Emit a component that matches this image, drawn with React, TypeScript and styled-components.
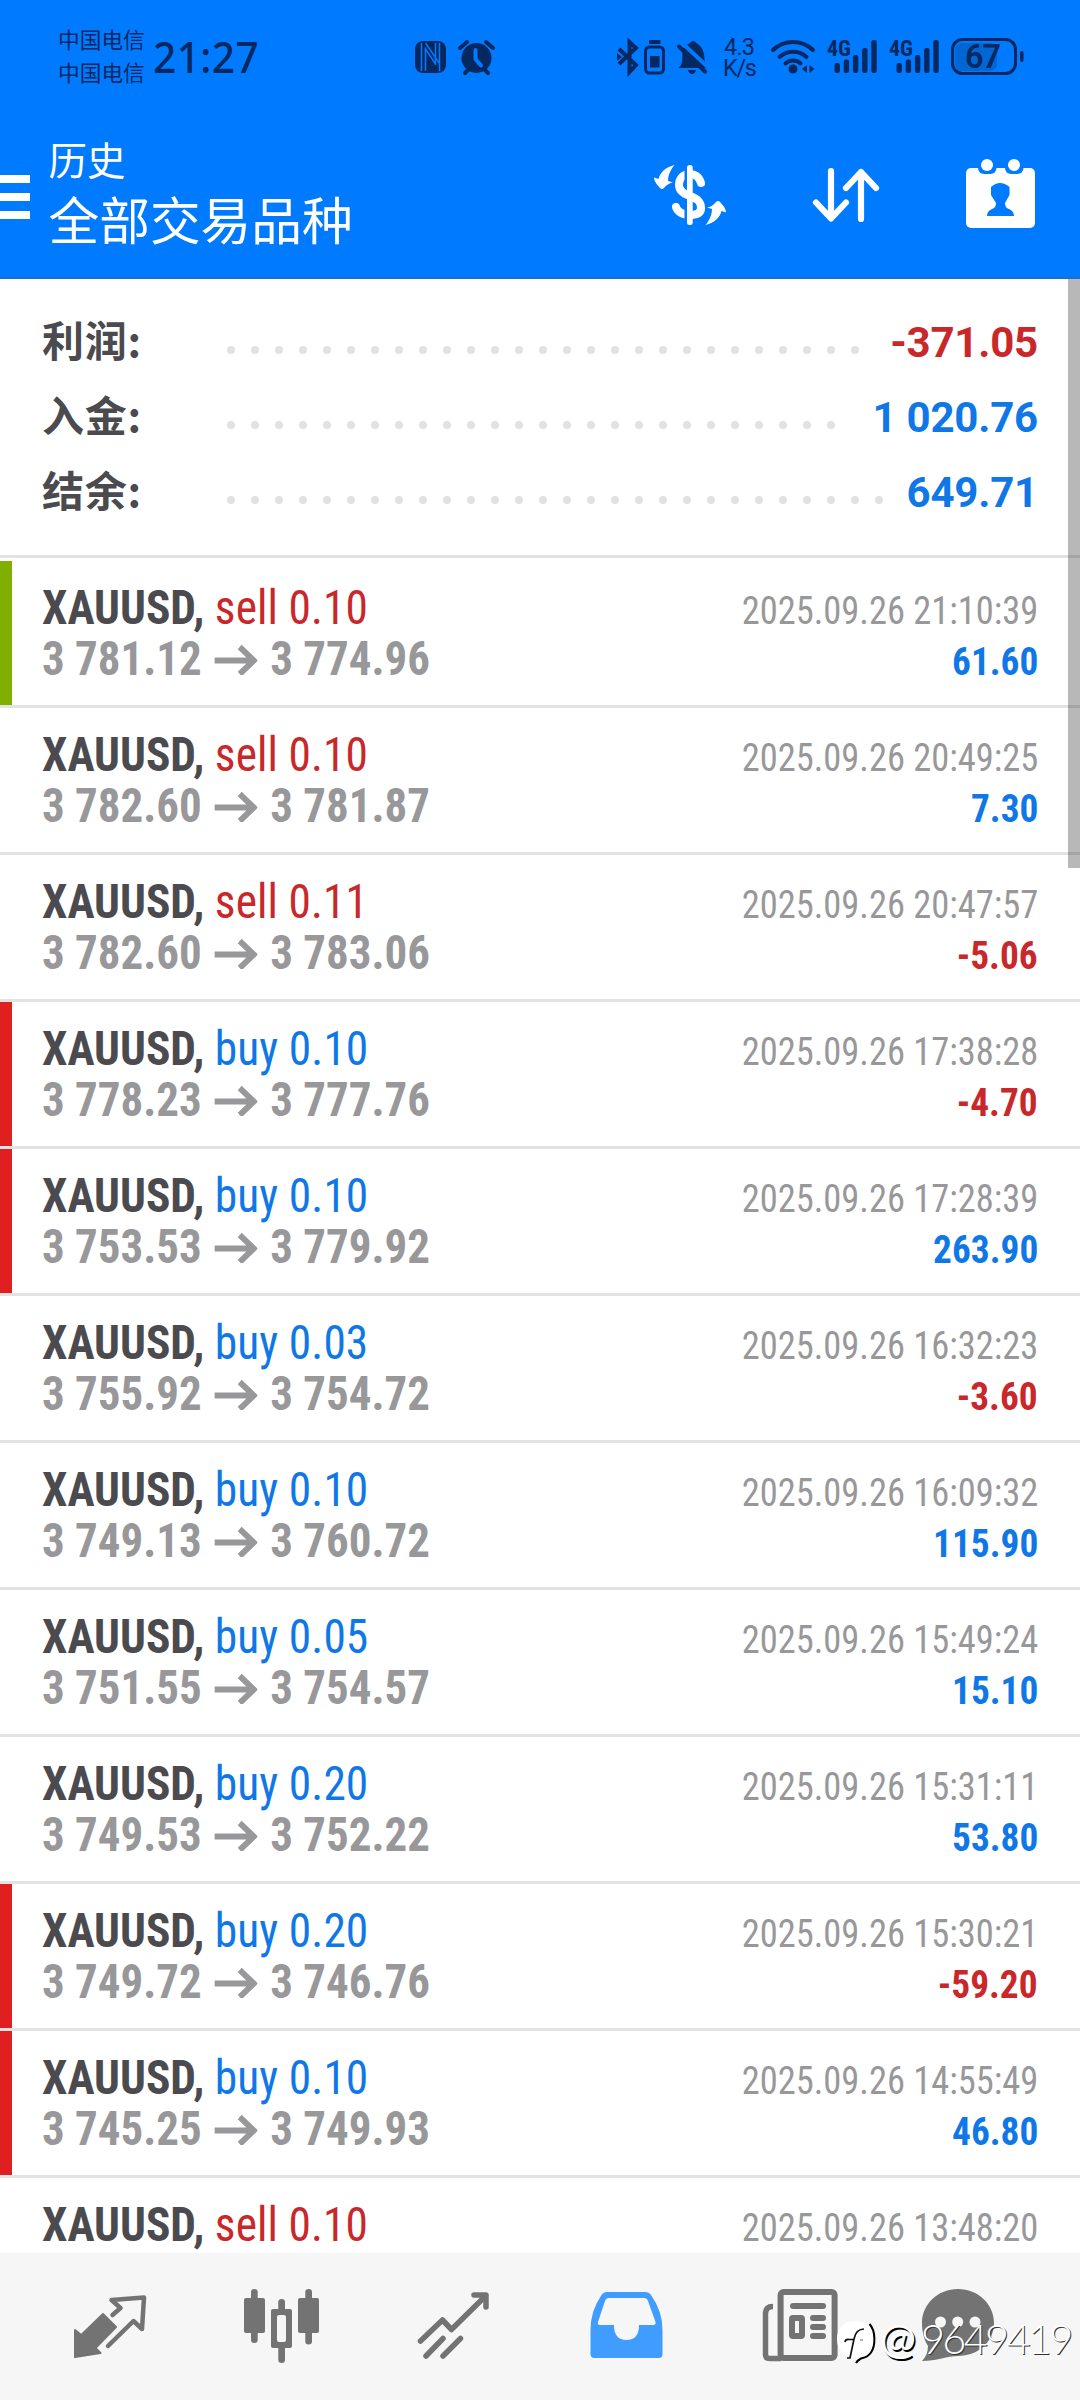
import React from "react";
import styled, { createGlobalStyle } from "styled-components";

const cond = `"Roboto Condensed", Roboto, "Liberation Sans Narrow", sans-serif`;
const cjk = `Roboto, "Noto Sans CJK SC", sans-serif`;
const ink = "#04285f";
const red = "#c9282b";
const blue = "#0f78e6";
const gray = "#98989b";

const Global = createGlobalStyle`
  *{box-sizing:border-box}
  body{margin:0;background:#fff;}
`;

const Screen = styled.div`
  width: 1080px;
  height: 2400px;
  display: flex;
  flex-direction: column;
  position: relative;
  overflow: hidden;
  background: #fff;
  font-family: ${cjk};
`;

const TopArea = styled.header`
  height: 279px;
  flex: none;
  background: #007aff;
  border-bottom: 2px solid #1a6fd0;
`;

const StatusBar = styled.div`
  height: 112px;
  padding: 0 56px 0 58px;
  display: flex;
  align-items: center;
  justify-content: space-between;
  color: ${ink};
`;

const StatusLeft = styled.div`
  display: flex;
  align-items: center;
  gap: 8px;
  white-space: nowrap;
`;

const Carriers = styled.div`
  font: 400 21.7px/33px "Noto Sans CJK SC", sans-serif;
  padding-bottom: 3px;
`;

const Clock = styled.div`
  font: 500 44px/50px "Noto Sans", sans-serif;
  letter-spacing: 0.4px;
  transform: scaleX(0.925);
  transform-origin: left;
`;

const AppBar = styled.div`
  height: 165px;
  display: flex;
  align-items: flex-start;
`;

const MenuButton = styled.div`
  width: 30px;
  margin-top: 63px;
  display: flex;
  flex-direction: column;
  gap: 10px;
`;
const MenuLine = styled.i`
  height: 8px;
  background: #fff;
`;

const Titles = styled.div`
  padding: 18px 0 0 18.5px;
  color: #fff;
  font-family: "Noto Sans CJK SC", sans-serif;
  flex: 1;
`;
const Small = styled.div`
  font-size: 38.5px;
  line-height: 56px;
`;
const Big = styled.div`
  font-size: 50.7px;
  line-height: 64px;
`;

const ActionsWrap = styled.div`
  height: 100px;
  width: 430px;
  margin-top: 33px;
`;

const Summary = styled.section`
  height: 279px;
  flex: none;
  padding: 26px 42px 0;
  border-bottom: 3px solid #e3e3e3;
`;
const SummaryRow = styled.div`
  height: 75px;
  display: flex;
  align-items: center;
`;
const SummaryLabel = styled.div`
  width: 176.5px;
  padding-bottom: 7px;
  font: 700 42px/68px "Noto Sans CJK SC", sans-serif;
  letter-spacing: 0.8px;
  color: #4a4a4f;
`;
const Leader = styled.div`
  flex: 1;
  height: 24px;
  margin: 15px 10px 0 0;
  display: flex;
  flex-wrap: wrap;
  overflow: hidden;
`;
const Dot = styled.i`
  width: 8px;
  height: 8px;
  margin: 8px;
  border-radius: 50%;
  background: #e2e2e2;
`;
const SummaryValue = styled.div<{ $neg?: boolean }>`
  font: 700 42px/75px Roboto, sans-serif;
  letter-spacing: -0.2px;
  color: ${(p) => (p.$neg ? red : blue)};
  white-space: pre;
`;

const Deals = styled.main`
  flex: 1;
  min-height: 0;
  overflow: hidden;
  padding-top: 3px;
`;
const Deal = styled.article<{ $bar?: string }>`
  height: 147px;
  padding: 21px 42px 0 42px;
  border-bottom: 3px solid #e3e3e3;
  display: flex;
  justify-content: space-between;
  position: relative;
  &::before {
    content: "";
    position: absolute;
    inset: 0 auto 0 0;
    width: 12px;
    background: ${(p) => p.$bar ?? "transparent"};
  }
`;
const Col = styled.div<{ $right?: boolean }>`
  display: flex;
  flex-direction: column;
  align-items: ${(p) => (p.$right ? "flex-end" : "flex-start")};
  font-family: ${cond};
  white-space: pre;
`;
const Line = styled.div<{ $squeeze: number }>`
  line-height: 51px;
  height: 51px;
  transform: scaleX(${(p) => p.$squeeze});
`;
const Title = styled(Line)`
  font-size: 48px;
  font-weight: 700;
  color: #4a4a4f;
  transform-origin: left;
`;
const Side = styled.span<{ $sell: boolean }>`
  font-weight: 400;
  letter-spacing: 0.1px;
  color: ${(p) => (p.$sell ? red : blue)};
`;
const Prices = styled(Line)`
  font-size: 48px;
  font-weight: 700;
  color: ${gray};
  display: flex;
  align-items: center;
  gap: 13.5px;
  transform-origin: left;
`;
const When = styled(Line)`
  font-size: 39.5px;
  padding-top: 3px;
  color: ${gray};
  transform-origin: right;
`;
const Profit = styled(Line)<{ $neg: boolean }>`
  font-size: 39.5px;
  padding-top: 3px;
  font-weight: 700;
  color: ${(p) => (p.$neg ? red : blue)};
  transform-origin: right;
`;

const ScrollThumb = styled.div`
  position: absolute;
  right: 0;
  top: 279px;
  width: 12px;
  height: 589px;
  background: rgba(0, 0, 0, 0.28);
`;

const TabBar = styled.nav`
  height: 147px;
  flex: none;
  background: #f6f6f6;
  display: flex;
`;

const Watermark = styled.div`
  position: absolute;
  left: 836px;
  top: 2309px;
  display: flex;
  align-items: center;
  color: #fff;
  font: 300 41.5px/58px Lato, sans-serif;
  text-shadow: 1px 1px 0 #333;
`;
const At = styled.span`
  margin-left: 4px;
  width: 41px;
  font: 400 43px/58px Lato, sans-serif;
  text-shadow: 1.5px 1.5px 0 #000;
`;
const Digits = styled.span`
  letter-spacing: -2.7px;
`;

const rows: [string, string, string, string, string, string, string?][] = [
  ["sell", "0.10", "3 781.12", "3 774.96", "21:10:39", "61.60", "#7fb000"],
  ["sell", "0.10", "3 782.60", "3 781.87", "20:49:25", "7.30"],
  ["sell", "0.11", "3 782.60", "3 783.06", "20:47:57", "-5.06"],
  ["buy", "0.10", "3 778.23", "3 777.76", "17:38:28", "-4.70", "#e02020"],
  ["buy", "0.10", "3 753.53", "3 779.92", "17:28:39", "263.90", "#e02020"],
  ["buy", "0.03", "3 755.92", "3 754.72", "16:32:23", "-3.60"],
  ["buy", "0.10", "3 749.13", "3 760.72", "16:09:32", "115.90"],
  ["buy", "0.05", "3 751.55", "3 754.57", "15:49:24", "15.10"],
  ["buy", "0.20", "3 749.53", "3 752.22", "15:31:11", "53.80"],
  ["buy", "0.20", "3 749.72", "3 746.76", "15:30:21", "-59.20", "#e02020"],
  ["buy", "0.10", "3 745.25", "3 749.93", "14:55:49", "46.80", "#e02020"],
  ["sell", "0.10", "", "", "13:48:20", ""],
];

const NetText = `"Roboto Condensed", Roboto, sans-serif`;

function Signal({ x }: { x: number }) {
  return (
    <g transform={`translate(${x} 0)`} fill={ink}>
      <text x="0" y="56" fontSize="22" fontWeight="700" fontFamily={NetText} textLength="24" lengthAdjust="spacingAndGlyphs">4G</text>
      {[63, 59.5, 55, 48, 40].map((t, i) => (
        <rect key={i} x={7.5 + i * 9.2} y={t} width="5.4" height={73 - t} rx="2.2" />
      ))}
    </g>
  );
}

const StatusIcons = () => (
  <svg width="612" height="60" viewBox="412 26 612 60" fill={ink}>
    <rect x="415" y="41" width="31" height="32" rx="8" />
    <path d="M421.500 43v28M425.500 71V49L435.500 64M435.500 43v22M425.500 43L439.500 63.500V71M439.500 43v20" stroke="#007aff" strokeWidth="1.500" fill="none" />
    <circle cx="476.500" cy="58" r="15" />
    <path d="M460 48l7-6M493 48l-7-6M465 73l4-4M488 73l-4-4" stroke={ink} strokeWidth="4" strokeLinecap="round" />
    <path d="M475.500 50v9l5.500 6.500" stroke="#007aff" strokeWidth="4" fill="none" strokeLinecap="round" />
    <path d="M619 49l17 16-6.500 7V42l6.500 6-17 16" stroke={ink} strokeWidth="4" fill="none" />
    <path d="M617 53l5 4-5 4z" />
    <rect x="645.500" y="47" width="18" height="26" rx="4" fill="none" stroke={ink} strokeWidth="3" />
    <rect x="649" y="40" width="11.500" height="4" rx="1" />
    <rect x="650" y="56" width="9.500" height="11.500" />
    <path d="M678.500 68c5-4 3.500-10 4-16 1-5 4-7 7.500-9 3-3 5-2 6 0 9 4 8 14 9 19l2 6z" />
    <path d="M688 70h8q-1 4-4 4t-4-4z" />
    <path d="M680 41l31 29" stroke="#007aff" strokeWidth="4" />
    <path d="M679 46.500l26 25" stroke={ink} strokeWidth="4" strokeLinecap="round" />
    <text x="724" y="55" fontSize="23.500" fontFamily="Roboto, sans-serif" textLength="31">4.3</text>
    <text x="723" y="76" fontSize="23.500" fontFamily="Roboto, sans-serif" textLength="34">K/s</text>
    <g stroke={ink} strokeWidth="4" strokeLinecap="round" fill="none">
      <path d="M773 50a29 29 0 0 1 40 0M779.500 57a20 20 0 0 1 27 0M785.500 63.500a11 11 0 0 1 15 0" />
    </g>
    <circle cx="793" cy="69" r="4.500" />
    <path d="M807 65v8l-5-4zM809.500 65v8l5-4z" />
    <Signal x={827} />
    <Signal x={889} />
    <rect x="955" y="43" width="42" height="28" rx="7" fill="#0066d4" />
    <rect x="952.500" y="39.500" width="63" height="34" rx="10" fill="none" stroke={ink} strokeWidth="3" />
    <rect x="1020" y="51" width="3.500" height="11" rx="1.700" />
    <text x="965" y="68" fontSize="32.500" fontWeight="600" fontFamily="Roboto, sans-serif" textLength="36">67</text>
  </svg>
);

const HeaderIcons = () => (
  <svg width="430" height="100" viewBox="650 145 430 100" fill="#fff">
    <path d="M701 183C699 176 694 174 690 174C682 174 679 180 679 185C679 191 684 194 690 196C698 199 701 202 701 208C701 213 697 215 690 215C682 215 677 211 676 207" fill="none" stroke="#fff" strokeWidth="8" strokeLinecap="round" />
    <path d="M684.500 165h2.500v20h-2.500zM684.500 204h2.500v20h-2.500z" fill="#007aff" />
    <rect x="687" y="165" width="5.700" height="60" rx="2.500" />
    <path id="swap" d="M674.600 165C665 167 660 173 658.500 179L654 177.500Q654 182 660 188Q662 190 664 188Q668 183 673 182.500L668 181C668 175 671 169 674.600 165Z" />
    <use href="#swap" transform="rotate(180 690 195)" />
    <g fill="none" stroke="#fff" strokeWidth="6.200" strokeLinecap="round" strokeLinejoin="round">
      <path d="M831 171v47M816 202.500l15 16 15-16M861 219v-47M846 188l15-16 15 16" />
    </g>
    <rect x="966" y="168" width="69" height="60" rx="5" />
    <rect x="978" y="160" width="18.500" height="14" rx="6" fill="#007aff" />
    <rect x="1005" y="160" width="18.500" height="14" rx="6" fill="#007aff" />
    <circle cx="987" cy="165" r="6" />
    <circle cx="1014" cy="165" r="6" />
    <path d="M991 187Q1000 179 1009.500 187V195L1005 203Q1005 208 1009 209Q1014 211 1014 216H987Q987 211 992 209Q996 208 996 203L991 195Z" fill="#007aff" />
  </svg>
);

const G = "#737373";
const TabIcons = () => (
  <svg width="1080" height="147" viewBox="0 2253 1080 147" fill={G}>
    <path d="M75 2330l6.300 5 21.700-21 13 13-20.500 21 5 5-25.500 4z" stroke={G} strokeWidth="2" strokeLinejoin="round" />
    <path d="M112.500 2315l8-7-9-8 32.500-2.500-2 31.500-8.500-8-25.500 25" fill="none" stroke={G} strokeWidth="4.500" strokeLinejoin="round" strokeLinecap="round" />
    <rect x="244" y="2298" width="21" height="35" rx="2" /><rect x="251" y="2289" width="6.700" height="54" rx="3.300" />
    <rect x="298" y="2298" width="21" height="35" rx="2" /><rect x="305.300" y="2289" width="6.700" height="55.500" rx="3.300" />
    <rect x="278.300" y="2299" width="6.700" height="64" rx="3.300" /><rect x="271" y="2309" width="21" height="39" rx="2" />
    <rect x="277" y="2315" width="9" height="27" rx="2" fill="#f6f6f6" />
    <path d="M420.500 2341l22-21 9 9.500 34.500-34M474 2295h12v12M426 2356l17-17.500M443 2356l17.500-17.500" fill="none" stroke={G} strokeWidth="5.500" strokeLinecap="round" strokeLinejoin="round" />
    <path d="M607 2292h38q4 0 6 3 11.500 16 11.500 35v24q0 4-4 4h-64q-4 0-4-4v-24q0-19 11-35 2-3 5.500-3z" fill="#419cff" />
    <path d="M609 2298h35q3 0 4 3l7.500 21q.5 3-2 3H639q0 15-12.500 15T614 2325h-14q-3 0-2-3l7-21q1-3 4-3z" fill="#f6f6f6" />
    <rect x="780.600" y="2292" width="54" height="66" rx="3" fill="none" stroke={G} strokeWidth="6" />
    <path d="M773 2306.500q-7.500 0-7.500 7v41q0 4 4 4h12" fill="none" stroke={G} strokeWidth="5.500" />
    <rect x="790" y="2303" width="36" height="6" rx="3" />
    <rect x="792" y="2318" width="10" height="18" rx="1" fill="none" stroke={G} strokeWidth="6" />
    <path d="M813 2318h10M813 2327h10M813 2336h10" stroke={G} strokeWidth="6" strokeLinecap="round" />
    <path d="M958 2289c20 0 36 15 36 34s-16 33-36 33c-10 0-22 5-36 5 4-4 6-9 6-15-4-6-6-14-6-23 0-19 16-34 36-34z" />
    <circle cx="940.500" cy="2322" r="5.500" fill="#f6f6f6" /><circle cx="957.700" cy="2322" r="5.500" fill="#f6f6f6" /><circle cx="975" cy="2322" r="5.500" fill="#f6f6f6" />
  </svg>
);

const Arrow = () => (
  <svg width="46" height="32" viewBox="0 0 46 32" fill="none" stroke={gray} strokeWidth="6.2">
    <path d="M0 17.500h42M27 4l15 13.500-15 13.500" />
  </svg>
);

export default function App() {
  return (
    <Screen>
      <Global />
      <TopArea>
        <StatusBar>
          <StatusLeft>
            <Carriers><div>中国电信</div><div>中国电信</div></Carriers>
            <Clock>21:27</Clock>
          </StatusLeft>
          <StatusIcons />
        </StatusBar>
        <AppBar>
          <MenuButton><MenuLine /><MenuLine /><MenuLine /></MenuButton>
          <Titles><Small>历史</Small><Big>全部交易品种</Big></Titles>
          <ActionsWrap><HeaderIcons /></ActionsWrap>
        </AppBar>
      </TopArea>
      <Summary>
        {[["利润:", "-371.05"], ["入金:", "1 020.76"], ["结余:", "649.71"]].map(([l, v]) => (
          <SummaryRow key={l}>
            <SummaryLabel>{l}</SummaryLabel>
            <Leader>{Array.from({ length: 34 }, (_, i) => <Dot key={i} />)}</Leader>
            <SummaryValue $neg={v[0] === "-"}>{v}</SummaryValue>
          </SummaryRow>
        ))}
      </Summary>
      <Deals>
        {rows.map(([side, lot, from, to, time, profit, bar]) => (
          <Deal key={time} $bar={bar}>
            <Col>
              <Title $squeeze={0.945}>XAUUSD, <Side $sell={side === "sell"}>{side} {lot}</Side></Title>
              {from && <Prices $squeeze={0.937}><span>{from}</span><Arrow /><span>{to}</span></Prices>}
            </Col>
            <Col $right>
              <When $squeeze={0.923}>2025.09.26 {time}</When>
              {profit && <Profit $squeeze={0.945} $neg={profit[0] === "-"}>{profit}</Profit>}
            </Col>
          </Deal>
        ))}
      </Deals>
      <TabBar><TabIcons /></TabBar>
      <ScrollThumb />
      <Watermark>
        <svg width="40" height="58" viewBox="0 0 40 58">
          <path d="M19 12C30 12 37.500 19 37.500 30C37.500 40 33 46 26 47.500L20 53V48.500C8 48.500 1 41 1 30C1 19 8 12 19 12Z" fill="#fff" />
          <path d="M33.500 15C40 22 39.500 37 35 43.500C32 48 28 49 25 49.500Q22 51 20 54" fill="none" stroke="#000" strokeWidth="2" />
          <path d="M9 33Q9.500 30 13 30.500H17M11 49H14L18 30Q20 20 28 20" fill="none" stroke="#111" strokeWidth="1.700" />
          <path d="M24 31h3" stroke="#666" strokeWidth="1" />
        </svg>
        <At>@</At>
        <Digits>9649419</Digits>
      </Watermark>
    </Screen>
  );
}
